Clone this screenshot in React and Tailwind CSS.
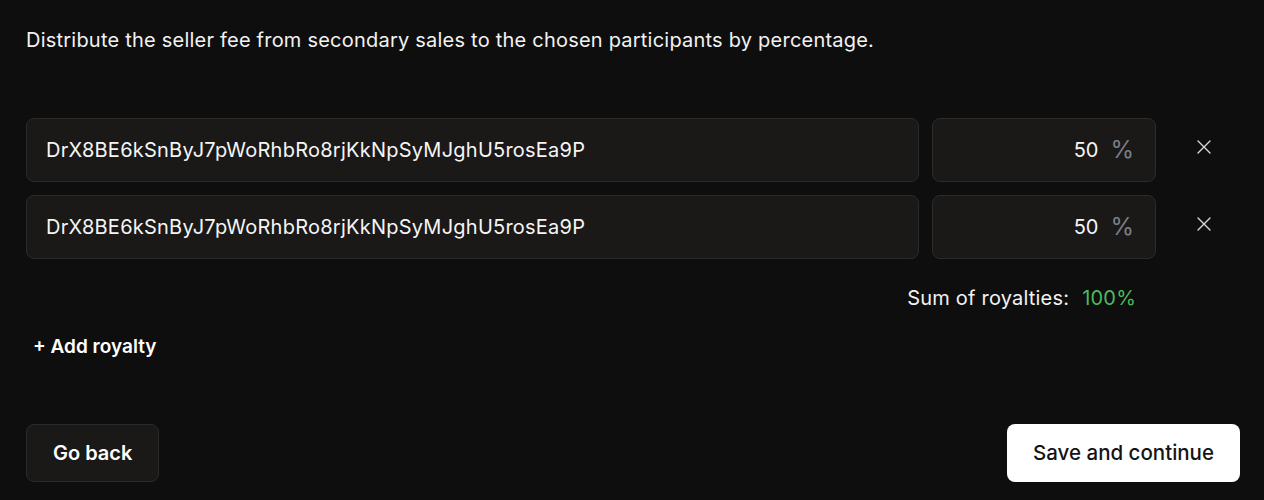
import { useState } from "react";

function CloseIcon() {
  return (
    <svg width="14" height="14" viewBox="0 0 14 14" fill="none">
      <path d="M1 1L13 13M13 1L1 13" stroke="currentColor" strokeWidth="1.4" strokeLinecap="round" />
    </svg>
  );
}

function RoyaltyRow({ address, percent, onRemove }) {
  return (
    <div className="flex items-center">
      <div className="flex-1 h-16 flex items-center px-[19px] rounded-lg bg-[#1a1918] border border-[#2b2b2b] text-[20px] tracking-[0.012em] text-[#f5f5f5]">
        {address}
      </div>
      <div className="w-[224px] ml-[13px] h-16 flex items-center justify-end pr-[21px] rounded-lg bg-[#1a1918] border border-[#2b2b2b]">
        <span className="text-[20px] text-[#f5f5f5]">{percent}</span>
        <span className="ml-[12px] text-[24px] text-[#7b7e87]">%</span>
      </div>
      <div className="w-[84px] pl-[28px] flex items-center">
        <button onClick={onRemove} className="w-10 h-10 mb-[6px] flex items-center justify-center text-[#d8d8d8]">
          <CloseIcon />
        </button>
      </div>
    </div>
  );
}

export default function App() {
  const [rows, setRows] = useState([
    { address: "DrX8BE6kSnByJ7pWoRhbRo8rjKkNpSyMJghU5rosEa9P", percent: 50 },
    { address: "DrX8BE6kSnByJ7pWoRhbRo8rjKkNpSyMJghU5rosEa9P", percent: 50 },
  ]);

  const total = rows.reduce((s, r) => s + r.percent, 0);

  return (
    <div className="min-h-[500px] bg-[#0e0e0e] pl-[26px] pr-[24px] pt-[26px] font-['Inter',sans-serif] text-white">
      <p className="text-[20px] leading-7 tracking-[0.011em] text-[#f2f2f2]">
        Distribute the seller fee from secondary sales to the chosen participants by percentage.
      </p>

      <div className="mt-16 flex flex-col gap-[13px]">
        {rows.map((row, i) => (
          <RoyaltyRow
            key={i}
            address={row.address}
            percent={row.percent}
            onRemove={() => setRows(rows.filter((_, j) => j !== i))}
          />
        ))}
      </div>

      <div className="mt-[25px] flex justify-end pr-[104px] text-[20px] leading-7 tracking-[0.01em]">
        <span className="text-[#f2f2f2]">Sum of royalties:</span>
        <span className="ml-[13px] text-[#4cbb5a]">{total}%</span>
      </div>

      <button
        onClick={() => setRows([...rows, { address: "", percent: 0 }])}
        className="mt-[21px] ml-[7px] text-[19px] leading-7 font-semibold text-white"
      >
        + Add royalty
      </button>

      <div className="mt-[63px] flex justify-between">
        <button className="h-[58px] px-[26px] rounded-lg bg-[#1a1918] border border-[#2b2b2b] text-[20px] font-semibold text-white">
          Go back
        </button>
        <button className="h-[58px] px-[26px] rounded-lg bg-white text-[20.5px] font-medium text-[#141414]">
          Save and continue
        </button>
      </div>
    </div>
  );
}
